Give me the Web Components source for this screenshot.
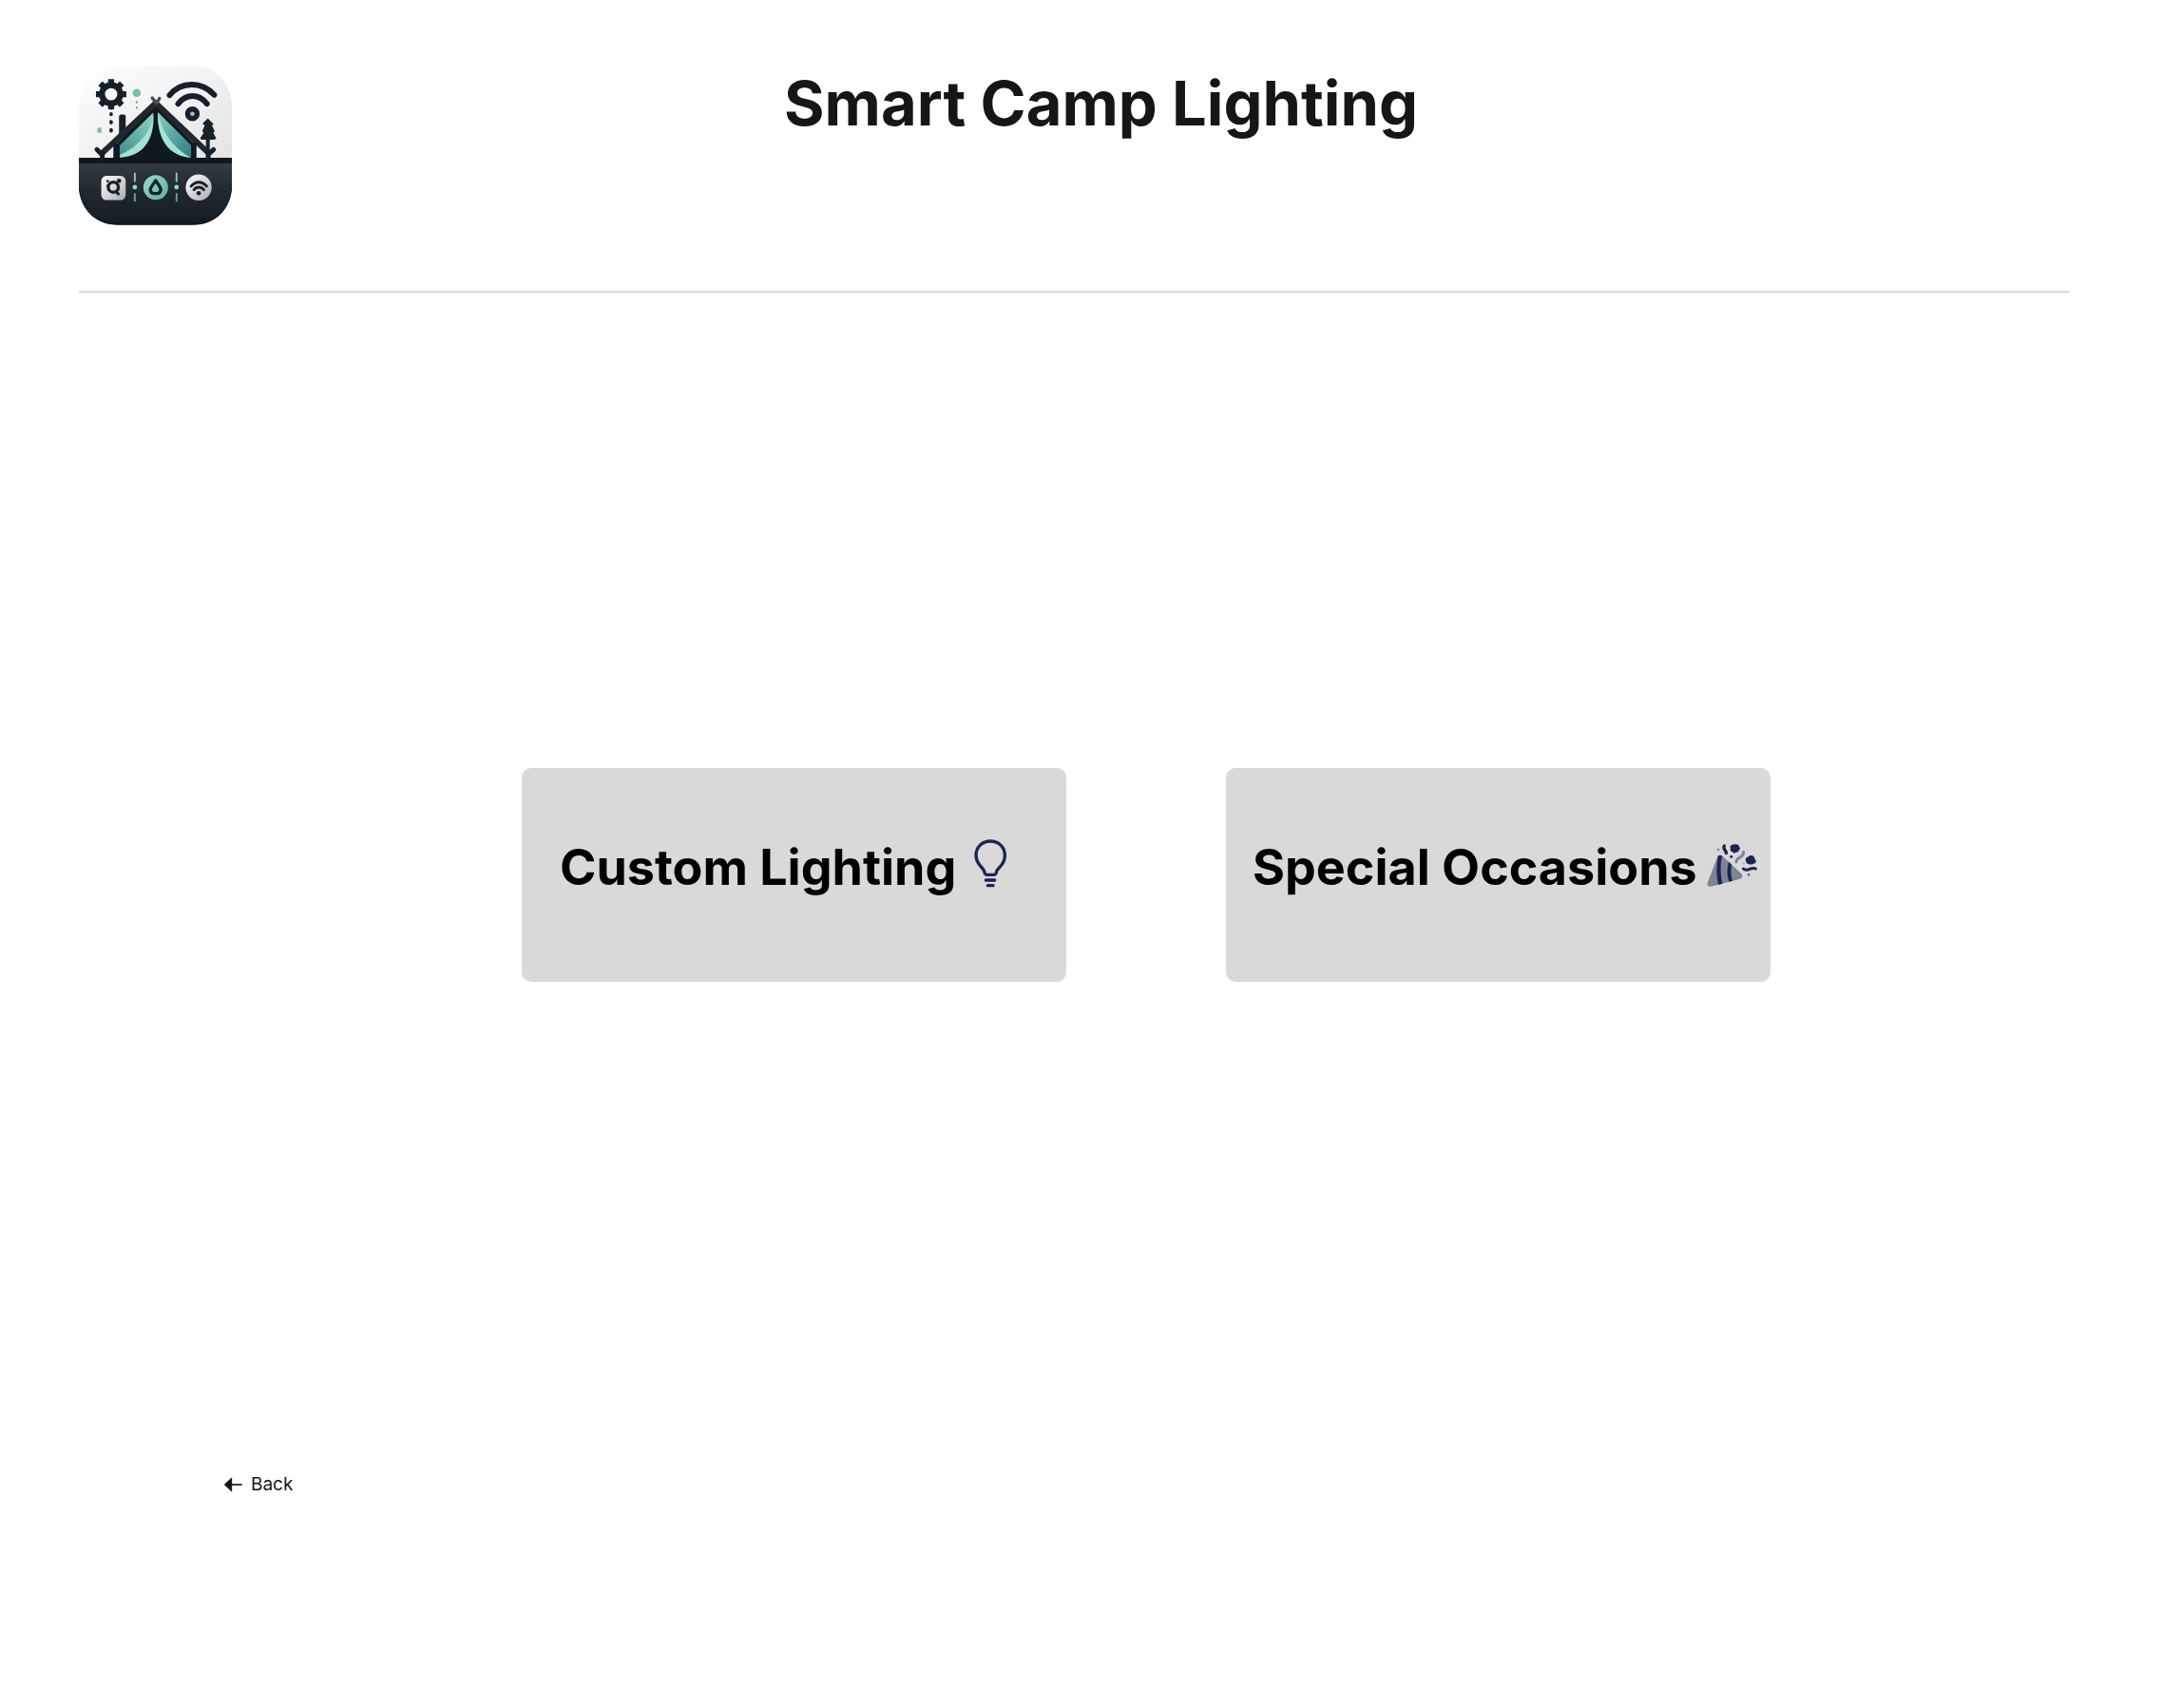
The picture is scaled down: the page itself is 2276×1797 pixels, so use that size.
<!DOCTYPE html>
<html lang="en">
<head>
<meta charset="utf-8">
<meta name="viewport" content="width=device-width, initial-scale=1">
<title>Smart Camp Lighting</title>
<style>
  body { margin: 0; background: #fff; color: #161616; font-family: Inter, "Liberation Sans", sans-serif; }
</style>
</head>
<body>
<camp-page>
  <camp-header slot="header">Smart Camp Lighting</camp-header>
  <mode-card>Custom Lighting<bulb-icon slot="icon"></bulb-icon></mode-card>
  <mode-card compact>Special Occasions<popper-icon slot="icon"></popper-icon></mode-card>
  <back-link slot="footer">Back</back-link>
</camp-page>
<script>
const define = (name, html) => customElements.define(name, class extends HTMLElement {
  constructor() {
    super();
    this.attachShadow({ mode: 'open' }).innerHTML = html;
  }
});

define('camp-page', `
<style>
  :host { display: block; box-sizing: border-box; padding: 69px 99px 80px 83px; }
  main { display: flex; justify-content: center; gap: 168px; padding: 500px 0 517px 152px; }
  footer { display: flex; padding-left: 149px; }
</style>
<slot name="header"></slot>
<main><slot></slot></main>
<footer><slot name="footer"></slot></footer>`);

define('camp-header', `
<style>
  :host { display: block; border-bottom: 2px solid #d9d9d9; padding-bottom: 69px; }
  header { display: grid; grid-template-columns: 161px 1fr 104px; }
  h1 { margin: 0; font-size: 65px; line-height: 80px; font-weight: 700; text-align: center; }
</style>
<header><camp-logo></camp-logo><h1><slot></slot></h1></header>`);

define('mode-card', `
<style>
  :host { display: block; flex: 0 1 573px; }
  button { display: flex; align-items: center; gap: 6px; width: 100%; height: 225px; border: 0; border-radius: 10px;
    background: #d9d9d9; color: #000; font: 700 52px/64px Inter, "Liberation Sans", sans-serif;
    padding: 0 0 16px 40px; white-space: nowrap; cursor: pointer; }
  :host([compact]) button { padding-left: 28px; }
  ::slotted([slot="icon"]) { padding-bottom: 10px; }
</style>
<button type="button"><span><slot></slot></span><slot name="icon"></slot></button>`);

define('back-link', `
<style>
  :host { display: block; }
  a { display: flex; align-items: center; gap: 8px; color: #161616; font-size: 19px; line-height: 24px; text-decoration: none; }
  svg { display: block; width: 24px; height: 24px; }
</style>
<a href="#"><svg viewBox="36 30 72 72" aria-hidden="true"><path d="M49 66L71 45V87Z" fill="#161616" stroke="#161616" stroke-width="3" stroke-linejoin="round"/><path d="M66 66H104" stroke="#161616" stroke-width="5"/></svg><slot></slot></a>`);

define('bulb-icon', `
<style>:host { display: block; } svg { display: block; width: 60px; height: 60px; }</style>
<svg viewBox="39 54 180 180" fill="none" stroke="#1c2551" stroke-width="10" stroke-linecap="round" stroke-linejoin="round" aria-hidden="true">
  <path d="M118 181H141C146 181 148 178 149 170C150 165 158 159 164 151C172 141 175 131 175 120C175 93 155 75 129.500 75C104 75 84 93 84 120C84 131 88 141 96 151C102 159 109 165 110 170C111 178 113 181 118 181Z"/>
  <path d="M115 198H143M121 215H138"/>
</svg>`);

define('popper-icon', `
<style>:host { display: block; } svg { display: block; width: 60px; height: 60px; }</style>
<svg viewBox="33 24 180 180" fill="none" stroke-linecap="round" stroke-linejoin="round" aria-hidden="true">
  <path d="M78 96C82 88 91 88 96 93L154 148C159 154 158 161 150 164L58 188C49 190 45 184 47 177Z" fill="#7d8498"/>
  <path d="M80 92Q86 87 93 91C87 121 87 151 94 179L81 182C74 153 75 123 80 92Z" fill="#1c2551"/>
  <path d="M114 110L123 119C120 137 121 154 126 170L115 173C108 154 108 132 114 110Z" fill="#1c2551"/>
  <path d="M100 60C94 71 107 73 106 83" stroke="#1c2551" stroke-width="10"/>
  <path d="M123 58Q127 52 132 56Q137 52 141 56Q147 56 147 62Q153 68 147 73Q145 82 137 80Q129 86 125 78Q116 74 120 68Q116 60 123 58Z" fill="#1c2551"/>
  <path d="M138 111C139 91 160 102 161 79" stroke="#7d8498" stroke-width="9"/>
  <path d="M174 95C183 84 198 92 196 101C204 107 200 116 192 116C184 121 171 119 168 109C166 101 168 96 174 95Z" fill="#1c2551"/>
  <path d="M160 132C173 145 184 124 199 132" stroke="#1c2551" stroke-width="9"/>
  <circle cx="122" cy="94" r="4.500" fill="#1c2551"/><circle cx="81" cy="72" r="4" fill="#7d8498"/>
  <circle cx="161" cy="115" r="4" fill="#b4b8c0"/><circle cx="177" cy="151" r="4" fill="#5d6480"/>
</svg>`);

define('camp-logo', `
<style>:host { display: block; } svg { display: block; width: 161px; height: 168px; }</style>
<svg viewBox="39 27 484 504" fill="none" stroke-linecap="round" stroke-linejoin="round" role="img" aria-label="Camp logo">
  <defs>
    <clipPath id="c"><path d="M165 27H397C475 27 523 82 523 160V398C523 476 475 531 397 531H165C87 531 39 476 39 398V160C39 82 87 27 165 27Z"/></clipPath>
    <linearGradient id="s" x1="0" y1="0" x2="1" y2="1"><stop offset="0" stop-color="#fff"/><stop offset="1" stop-color="#e2e3e4"/></linearGradient>
    <linearGradient id="g" x1="0" y1="0" x2="0" y2="1"><stop offset="0" stop-color="#353c42"/><stop offset=".5" stop-color="#1e282e"/><stop offset="1" stop-color="#121c22"/></linearGradient>
    <linearGradient id="l" x1="1" y1="0" x2="0" y2="1"><stop offset="0" stop-color="#8fd5c5"/><stop offset="1" stop-color="#3f8b8b"/></linearGradient>
    <linearGradient id="r" x1="0" y1="0" x2="1" y2="1"><stop offset="0" stop-color="#8acfc1"/><stop offset="1" stop-color="#2f7b80"/></linearGradient>
    <linearGradient id="m" x1="0" y1="0" x2="1" y2="1"><stop offset="0" stop-color="#9addcb"/><stop offset="1" stop-color="#66a99f"/></linearGradient>
    <linearGradient id="w" x1="0" y1="0" x2="1" y2="1"><stop offset="0" stop-color="#fff"/><stop offset="1" stop-color="#a9adb0"/></linearGradient>
  </defs>
  <g clip-path="url(#c)">
    <path d="M39 27H523V325H39Z" fill="url(#s)"/>
    <path d="M39 330H523V531H39Z" fill="url(#g)"/>
    <path d="M39 318H523V335H39Z" fill="#0e171d"/>
  </g>
  <path d="M39 398C39 476 87 529 165 529H397C475 529 523 476 523 398" stroke="#0d171d" stroke-width="3"/>
  <g stroke="#15212a">
    <circle cx="141" cy="117" r="29" stroke-width="19"/>
    <path d="M141 69V83M141 151V165M93 117H107M175 117H189M107 83L117 93M165 141L175 151M175 83L165 93M117 141L107 151" stroke-width="19" stroke-linecap="butt"/>
    <path d="M141 158V161M141 179V181M141 204V207M141 230V233" stroke-width="11"/>
    <path d="M326 120C363 76 427 76 467 119" stroke-width="18"/>
    <path d="M353 147C379 115 418 115 444 147" stroke-width="18"/>
    <circle cx="398" cy="179" r="15" stroke-width="16" fill="#91cdbd"/>
  </g>
  <circle cx="222" cy="113" r="13" fill="#77c1a8"/><ellipse cx="104" cy="231" rx="7" ry="9" fill="#77bda7"/>
  <path d="M222 141V144M222 159V161" stroke="#87aba4" stroke-width="6"/>
  <path d="M166 187Q166 181 172 181H181Q187 181 187 187V235L166 255Z" fill="#192229"/>
  <path d="M281 148L407 277V325H155V277Z" fill="#10191f"/>
  <path d="M274 175C279 249 245 309 168 317V279Z" fill="url(#l)"/>
  <path d="M274 175C275 221 238 278 169 309V317C245 314 281 256 274 175Z" fill="#a1e4d0"/>
  <path d="M289 174C287 248 312 311 394 317V278Z" fill="url(#r)"/>
  <path d="M289 174C286 240 311 309 386 317H393C345 293 300 240 289 174Z" fill="#a1e4d0"/>
  <path d="M113 303L282 145L447 301" stroke="#20272d" stroke-width="18"/>
  <path d="M271 129L285 146L294 130" stroke="#454e55" stroke-width="10"/>
  <path d="M96 292L112 308M113 304V320M465 292L451 305M448 302V319" stroke="#15212a" stroke-width="15"/>
  <path d="M155 279V320M404 277V320" stroke="#111a20" stroke-width="14"/>
  <path d="M447 193L465 211L460 216L469 235L464 239L474 257L466 261H453V299H441V261H426L423 256L434 239L429 234L437 216L430 210Z" fill="#17232c"/>
  <rect x="110" y="375" width="77" height="77" rx="16" fill="url(#w)"/>
  <circle cx="148" cy="411" r="16" stroke="#17232b" stroke-width="10"/>
  <path d="M157 425L164 433" stroke="#17232b" stroke-width="9"/><circle cx="166" cy="391" r="7" fill="#17232b"/><circle cx="130" cy="392" r="4" fill="#17232b"/><path d="M129 407L135 401" stroke="#17232b" stroke-width="6"/>
  <circle cx="282" cy="412" r="39" fill="url(#m)"/>
  <path d="M282 390C289 402 298 411 298 419Q297 430 287 431H276Q266 430 265 419C265 411 275 402 282 390Z" stroke="#13242a" stroke-width="10"/>
  <circle cx="418" cy="412" r="41" fill="url(#w)"/>
  <path d="M394 408C408 391 429 391 443 408M403 419C411 409 426 409 434 419" stroke="#14222a" stroke-width="9"/><circle cx="418" cy="430" r="7" fill="#14222a"/>
  <path d="M216 368V392M348 368V392" stroke="#8fc1bb" stroke-width="6"/><path d="M216 432V454M348 432V454" stroke="#6a9da0" stroke-width="6"/>
  <circle cx="216" cy="411" r="7" fill="#8ee0d4"/><circle cx="348" cy="411" r="7" fill="#8ee0d4"/>
</svg>`);
</script>
</body>
</html>
